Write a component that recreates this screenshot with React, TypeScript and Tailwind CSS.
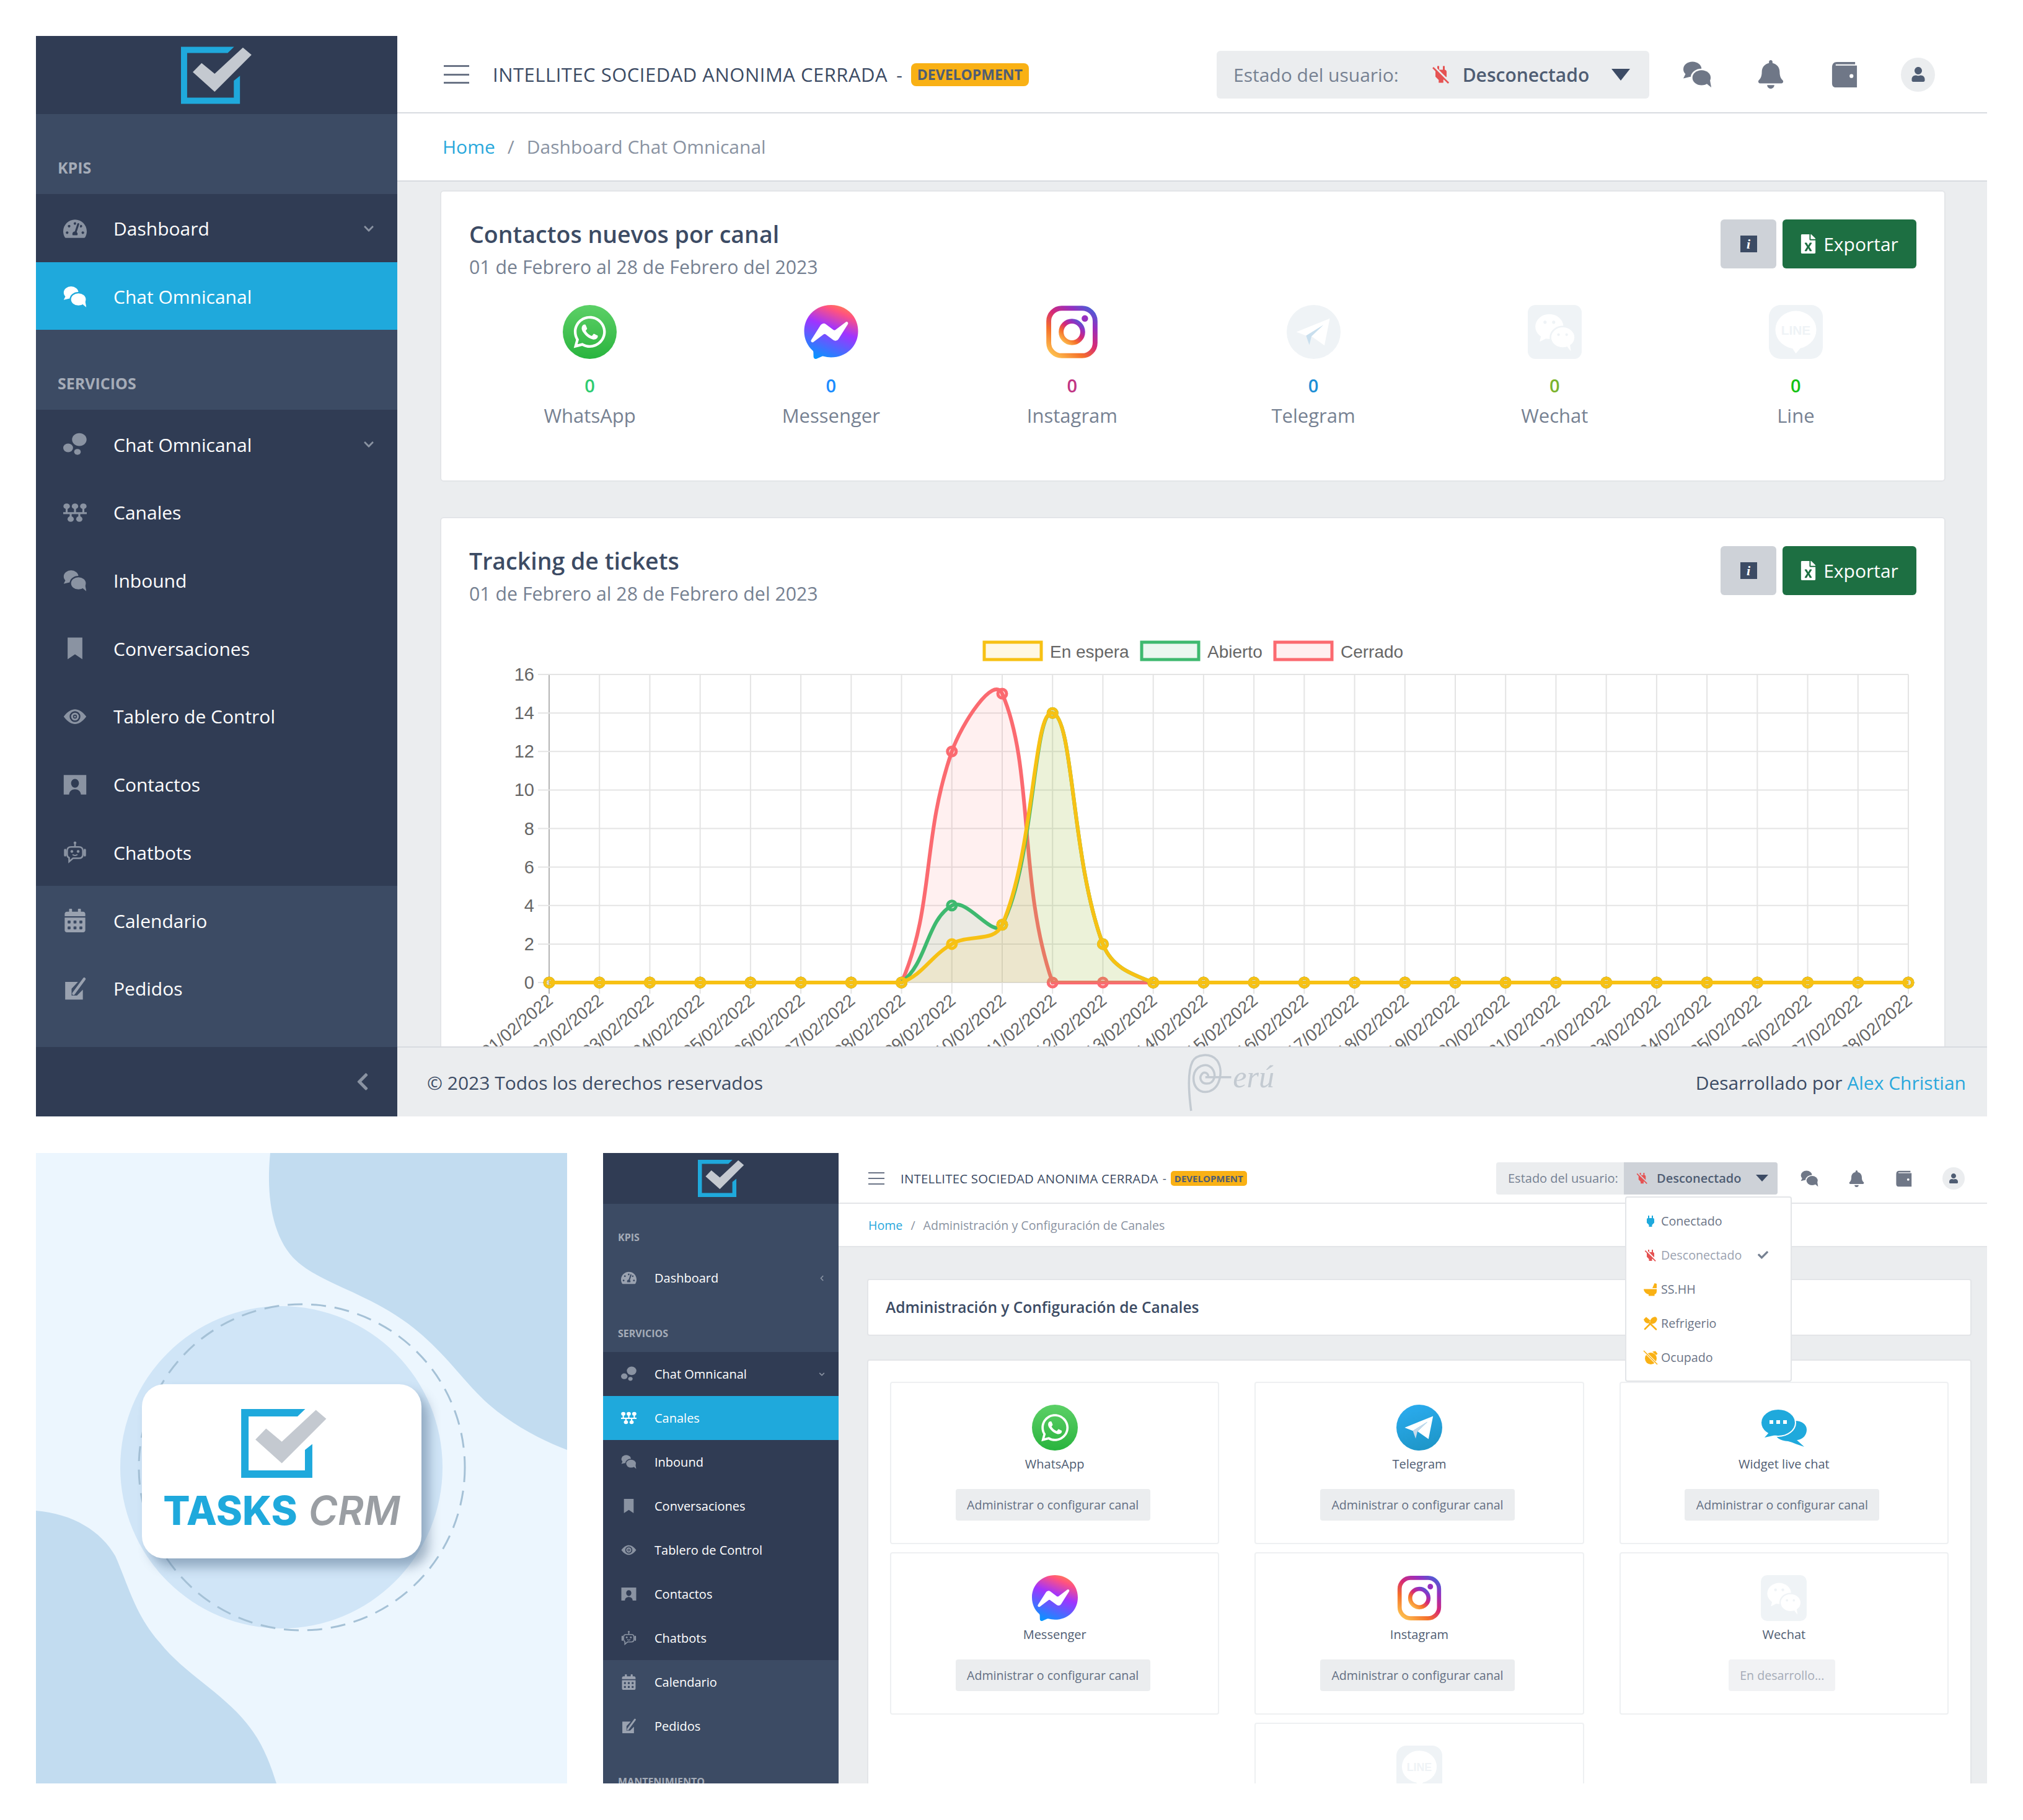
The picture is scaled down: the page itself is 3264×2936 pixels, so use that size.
import React from "react";
import { FaBell, FaCalendarAlt, FaCheck, FaChevronDown, FaChevronLeft, FaFileExcel, FaTachometerAlt, FaUser, FaWhatsapp } from "react-icons/fa";
import { MdPower, MdPowerOff } from "react-icons/md";

type IconProps = { className?: string };

function TasksLogo({ className }: IconProps) {
  return (
    <svg viewBox="0 0 290 232" className={className}>
      <path d="M0 0H216L190 25H25V207H215V138L240 118V232H0Z" fill="#1fa9dc" />
      <path d="M84 66L48 103L137 183L287 33L252 3L137 110Z" fill="#c4c9d0" />
    </svg>
  );
}

function ChatIcon({ className }: IconProps) {
  return (
    <svg viewBox="0 0 24 24" fill="currentColor" className={className}>
      <mask id="chat-back">
        <rect width="24" height="24" fill="white" />
        <ellipse cx="15.5" cy="14.5" rx="9" ry="7.5" fill="black" />
      </mask>
      <g mask="url(#chat-back)">
        <ellipse cx="8" cy="7.5" rx="7.5" ry="6.2" />
        <path d="M3 10L0.5 15L9 13Z" />
      </g>
      <ellipse cx="15.5" cy="14.5" rx="7.5" ry="6.2" />
      <path d="M18 18L23.5 22.5L22 14Z" />
    </svg>
  );
}

function CirclesIcon({ className }: IconProps) {
  return (
    <svg viewBox="0 0 24 24" fill="currentColor" className={className}>
      <ellipse cx="16.4" cy="7" rx="7.4" ry="6.6" />
      <ellipse cx="5" cy="15.5" rx="5" ry="4.4" />
      <ellipse cx="14.5" cy="19.5" rx="3.4" ry="3" />
    </svg>
  );
}

function ChannelsIcon({ className }: IconProps) {
  return (
    <svg viewBox="0 0 24 24" fill="currentColor" className={className}>
      <ellipse cx="3.5" cy="5.5" rx="3.3" ry="2.8" />
      <ellipse cx="12" cy="5.5" rx="3.3" ry="2.8" />
      <ellipse cx="20.5" cy="5.5" rx="3.3" ry="2.8" />
      <rect x="0" y="11.5" width="24" height="2" />
      <rect x="2.5" y="5.5" width="2" height="7" />
      <rect x="11" y="5.5" width="2" height="7" />
      <rect x="19.5" y="5.5" width="2" height="7" />
      <rect x="6.6" y="12" width="2" height="6" />
      <rect x="15.4" y="12" width="2" height="6" />
      <ellipse cx="7.6" cy="18.5" rx="3.2" ry="2.8" />
      <ellipse cx="16.4" cy="18.5" rx="3.2" ry="2.8" />
    </svg>
  );
}

function BookmarkIcon({ className }: IconProps) {
  return (
    <svg viewBox="0 0 24 24" fill="currentColor" className={className}>
      <path d="M4.5 1H19.5V23L12 18L4.5 23Z" />
    </svg>
  );
}

function EyeIcon({ className }: IconProps) {
  return (
    <svg viewBox="0 0 24 24" fill="currentColor" className={className}>
      <path fillRule="evenodd" d="M0.5 12C4.5 6.5 8.5 4.5 12 4.5S19.5 6.5 23.5 12C19.5 17.5 15.5 19.5 12 19.5S4.5 17.5 0.5 12ZM12 6.5A5.5 5.5 0 1 0 12 17.5A5.5 5.5 0 0 0 12 6.5Z" />
      <path fillRule="evenodd" d="M12 8A4 4 0 1 1 12 16A4 4 0 0 1 12 8ZM12 10A2 2 0 1 0 12 14A2 2 0 0 0 12 10Z" />
      <circle cx="12" cy="12" r="1" />
    </svg>
  );
}

function ContactIcon({ className }: IconProps) {
  return (
    <svg viewBox="0 0 24 24" fill="currentColor" className={className}>
      <path fillRule="evenodd" d="M0.5 2H23.5V22H18C18 18.5 15 16.5 12 16.5S6 18.5 6 22H0.5ZM12 6A4 4.5 0 1 0 12 15A4 4.5 0 0 0 12 6Z" />
    </svg>
  );
}

function BotIcon({ className }: IconProps) {
  return (
    <svg viewBox="0 0 24 24" fill="none" stroke="currentColor" strokeWidth="1.6" className={className}>
      <path d="M8 6.5H16C18.5 6.5 20 8 20 10.5V14C20 16.5 18.5 18 16 18H10L6 21.5V17.5C4.8 17 4 15.8 4 14V10.5C4 8 5.5 6.5 8 6.5Z" />
      <path d="M12 6.5V3.5" />
      <circle cx="12" cy="2.4" r="1.4" fill="currentColor" stroke="none" />
      <path d="M2 9.5V15M22 9.5V15" strokeWidth="2.4" strokeLinecap="round" />
      <circle cx="8.8" cy="11" r="1.4" fill="currentColor" stroke="none" />
      <circle cx="15.2" cy="11" r="1.4" fill="currentColor" stroke="none" />
      <path d="M9.5 14.2C11 15.4 13 15.4 14.5 14.2" strokeWidth="1.2" />
    </svg>
  );
}

function OrderIcon({ className }: IconProps) {
  return (
    <svg viewBox="0 0 24 24" fill="currentColor" className={className}>
      <path d="M2 5H15L8.5 12V19H14L20 13V23H2Z" />
      <path d="M10.5 17L21.5 2" fill="none" stroke="currentColor" strokeWidth="2.8" strokeLinecap="round" />
    </svg>
  );
}

function WalletIcon({ className }: IconProps) {
  return (
    <svg viewBox="0 0 24 24" fill="currentColor" className={className}>
      <path d="M2 6C2 3 3.5 1.5 6 1.5H21V3.5H5V4.5H22.5V22.5H5C3 22.5 2 21 2 19ZM18 11.5A1.6 1.6 0 1 0 18 14.7A1.6 1.6 0 0 0 18 11.5Z" fillRule="evenodd" />
    </svg>
  );
}

function ToiletIcon({ className }: IconProps) {
  return (
    <svg viewBox="0 0 24 24" fill="currentColor" className={className}>
      <path d="M15 10L18.5 2L22 3V10Z" />
      <path d="M1 11.5H22V15C22 18 20.5 19.5 18.5 20V22.5H9V20C5 19.5 1.5 16 1 11.5Z" />
    </svg>
  );
}

function CutleryIcon({ className }: IconProps) {
  return (
    <svg viewBox="0 0 24 24" fill="currentColor" className={className}>
      <ellipse cx="17" cy="7" rx="6.5" ry="4.6" transform="rotate(-45 17 7)" />
      <path d="M13 11L3 21" fill="none" stroke="currentColor" strokeWidth="2.6" strokeLinecap="round" />
      <path d="M1 5.5L5 1.5L12 7.5L7.5 12C4.5 11.5 2 9 1 5.5Z" />
      <path d="M9 10L21 21.5" fill="none" stroke="currentColor" strokeWidth="2.6" strokeLinecap="round" />
    </svg>
  );
}

function AlarmOffIcon({ className }: IconProps) {
  return (
    <svg viewBox="0 0 24 24" fill="currentColor" className={className}>
      <circle cx="12.5" cy="13.5" r="9.5" />
      <path d="M15 2.5L20 1.5L23.5 6L21 8Z" />
      <path d="M1 1L23 23" fill="none" stroke="#ffffff" strokeWidth="3.6" />
      <path d="M1 1L23 23" fill="none" stroke="currentColor" strokeWidth="1.6" />
    </svg>
  );
}

function WhatsappLogo({ className }: IconProps) {
  return (
    <div className={`flex items-center justify-center rounded-full bg-gradient-to-b from-[#5bd066] to-[#27b43e] text-white ${className}`}>
      <FaWhatsapp className="w-[68%] h-[68%]" />
    </div>
  );
}

function MessengerLogo({ className }: IconProps) {
  return (
    <svg viewBox="0 0 24 24" className={className}>
      <defs>
        <linearGradient id="messenger-fill" x1="0.2" y1="1" x2="0.6" y2="0">
          <stop offset="0" stopColor="#0099ff" />
          <stop offset="0.6" stopColor="#a033ff" />
          <stop offset="0.9" stopColor="#ff5280" />
          <stop offset="1" stopColor="#ff7061" />
        </linearGradient>
      </defs>
      <path fill="url(#messenger-fill)" fillRule="evenodd" d="M12 0C5.24 0 0 4.952 0 11.64c0 3.499 1.434 6.521 3.769 8.61a.96.96 0 0 1 .323.683l.065 2.135a.96.96 0 0 0 1.347.85l2.381-1.053a.96.96 0 0 1 .641-.046A13 13 0 0 0 12 23.28c6.76 0 12-4.952 12-11.64S18.76 0 12 0" />
      <path fill="#ffffff" d="M18.806 7.44c.522-.03.971.567.63 1.094l-4.178 6.628a1.61 1.61 0 0 1-2.319.427l-3.32-2.489a.86.86 0 0 0-1.03 0l-4.482 3.402c-.6.454-1.385-.263-.981-.899l4.178-6.628a1.61 1.61 0 0 1 2.319-.427l3.32 2.489a.86.86 0 0 0 1.03 0l4.483-3.402a.6.6 0 0 1 .35-.195" />
    </svg>
  );
}

function InstagramLogo({ className }: IconProps) {
  return (
    <svg viewBox="0 0 100 100" className={className}>
      <defs>
        <linearGradient id="insta-stroke" x1="0.1" y1="1" x2="0.9" y2="0">
          <stop offset="0" stopColor="#fdc04e" />
          <stop offset="0.3" stopColor="#f5702a" />
          <stop offset="0.55" stopColor="#d62976" />
          <stop offset="0.8" stopColor="#962fbf" />
          <stop offset="1" stopColor="#4f5bd5" />
        </linearGradient>
      </defs>
      <rect x="7" y="6" width="86" height="88" rx="24" fill="none" stroke="url(#insta-stroke)" strokeWidth="9" />
      <circle cx="50" cy="50" r="20" fill="none" stroke="url(#insta-stroke)" strokeWidth="9" />
      <circle cx="74" cy="25" r="6" fill="#962fbf" />
    </svg>
  );
}

function TelegramLogo({ className, faded }: IconProps & { faded?: boolean }) {
  return (
    <svg viewBox="0 0 100 100" className={className}>
      <defs>
        <linearGradient id="telegram-fill" x1="0.3" y1="0" x2="0.6" y2="1">
          <stop offset="0" stopColor="#2aabee" />
          <stop offset="1" stopColor="#1e96c8" />
        </linearGradient>
      </defs>
      <circle cx="50" cy="50" r="50" fill={faded ? "#eff3f6" : "url(#telegram-fill)"} />
      <path d="M18 50L80 25L70 75L46 58L68 37L36 57Z" fill="#ffffff" />
      <path d="M36 57L42 74L46 58L68 37Z" fill={faded ? "#c9dfee" : "#c8daea"} />
    </svg>
  );
}

function WidgetChatLogo({ className }: IconProps) {
  return (
    <svg viewBox="0 0 74 62" fill="#1fa9dc" className={className}>
      <path d="M74 34C74 46 64 51 58 51L70 62C60 59 52 55 44 53C30 52 24 47 24 40C34 42 50 38 55 20C66 20 74 26 74 34Z" />
      <ellipse cx="28" cy="23" rx="28" ry="22" stroke="#ffffff" strokeWidth="2" />
      <path d="M14 38L6 47L24 43Z" />
      <rect x="14" y="19" width="6" height="6" fill="#ffffff" />
      <rect x="25" y="19" width="6" height="6" fill="#ffffff" />
      <rect x="36" y="19" width="6" height="6" fill="#ffffff" />
    </svg>
  );
}

function WechatLogo({ className }: IconProps) {
  return (
    <svg viewBox="0 0 100 100" className={className}>
      <rect width="100" height="100" rx="14" fill="#eff3f6" />
      <ellipse cx="40" cy="40" rx="26" ry="23" fill="#ffffff" />
      <path d="M25 56L22 68L38 60Z" fill="#ffffff" />
      <ellipse cx="65" cy="60" rx="23" ry="20" fill="#ffffff" stroke="#eff3f6" strokeWidth="3" />
      <path d="M72 76L80 86L78 72Z" fill="#ffffff" />
      <circle cx="32" cy="32" r="3" fill="#eff3f6" />
      <circle cx="48" cy="32" r="3" fill="#eff3f6" />
      <circle cx="57" cy="55" r="2.5" fill="#eff3f6" />
      <circle cx="72" cy="55" r="2.5" fill="#eff3f6" />
    </svg>
  );
}

function LineLogo({ className }: IconProps) {
  return (
    <svg viewBox="0 0 100 100" className={className}>
      <rect width="100" height="100" rx="22" fill="#eff3f6" />
      <ellipse cx="50" cy="46" rx="38" ry="35" fill="#ffffff" />
      <path d="M42 78L50 90L62 76Z" fill="#ffffff" />
      <text x="50" y="55" textAnchor="middle" fontSize="24" fontWeight="700" fill="#eff3f6" fontFamily="Liberation Sans">LINE</text>
    </svg>
  );
}

function PeruLogo() {
  return (
    <div className="flex items-center w-[150px]">
      <svg viewBox="0 0 70 92" fill="none" stroke="#c3cad1" strokeWidth="3.4" className="w-[84px] h-[96px]">
        <path d="M8 90C4 60 2 30 10 14C16 2 38 0 48 12C58 26 54 54 36 60C20 64 10 52 12 36C14 22 30 14 40 24C48 34 44 48 32 48C24 48 20 40 24 34C28 28 36 32 34 38" />
        <path d="M30 38H70" />
      </svg>
      <span className="-ml-[3px] -mt-[18px] font-['Liberation_Serif',serif] italic text-[50px] leading-none text-[#c3cad1]">erú</span>
    </div>
  );
}

type NavItem = { label: string; Icon: React.ComponentType<IconProps>; tone: "dark" | "active" | "plain"; chevron?: "down" | "left" };

const NavRowTone = { dark: "bg-[#303c54]", active: "bg-[#1fa9dc]", plain: "" };
const NavIconTone = { dark: "text-[#8a93a2]", active: "text-white", plain: "text-[#9aa2b0]" };

const BIG = {
  row: "h-[109.7px] gap-[43px] pl-[44px] pt-[2px] text-[30px]",
  icon: "w-[38px] h-[38px]",
  chevron: "w-[18px] h-[18px] mr-[37px]",
  section: "h-[129px] pl-[35px] pb-[24px] text-[25px]",
};
const SMALL = {
  row: "h-[71px] gap-[29px] pl-[29px] text-[20px]",
  icon: "w-[25px] h-[25px]",
  chevron: "w-[10px] h-[10px] mr-[22px]",
  section: "h-[84px] pl-[24px] pb-[18px] text-[16px]",
};

function SidebarRow({ item, size }: { item: NavItem; size: typeof BIG }) {
  const Chevron = item.chevron === "left" ? FaChevronLeft : FaChevronDown;
  return (
    <div className={`flex items-center shrink-0 text-white ${size.row} ${NavRowTone[item.tone]}`}>
      <span className={`flex items-center justify-center shrink-0 ${size.icon} ${NavIconTone[item.tone]}`}>
        <item.Icon className="w-full h-full" />
      </span>
      <span className="flex-1">{item.label}</span>
      {item.chevron && <Chevron className={`text-[#8a93a2] ${size.chevron}`} />}
    </div>
  );
}

function SidebarSection({ title, size }: { title: string; size: typeof BIG }) {
  return <div className={`flex items-end shrink-0 font-bold text-[#a5acb8] ${size.section}`}>{title}</div>;
}

function servicios(first: NavItem["tone"]): NavItem[] {
  return [
    { label: "Canales", Icon: ChannelsIcon, tone: first },
    { label: "Inbound", Icon: ChatIcon, tone: "dark" },
    { label: "Conversaciones", Icon: BookmarkIcon, tone: "dark" },
    { label: "Tablero de Control", Icon: EyeIcon, tone: "dark" },
    { label: "Contactos", Icon: ContactIcon, tone: "dark" },
    { label: "Chatbots", Icon: BotIcon, tone: "dark" },
    { label: "Calendario", Icon: FaCalendarAlt, tone: "plain" },
    { label: "Pedidos", Icon: OrderIcon, tone: "plain" },
  ];
}

function HamburgerIcon({ className, bar }: { className: string; bar: string }) {
  return (
    <div className={`flex flex-col justify-between ${className}`}>
      <span className={`block w-full bg-[#6b7486] ${bar}`} />
      <span className={`block w-full bg-[#6b7486] ${bar}`} />
      <span className={`block w-full bg-[#6b7486] ${bar}`} />
    </div>
  );
}

function ExportActions() {
  return (
    <div className="flex gap-[10px]">
      <button className="flex items-center justify-center w-[90px] h-[79px] rounded-[6px] bg-[#ced2d8]">
        <span className="flex items-center justify-center w-[27px] h-[27px] bg-[#3c4b64] text-white text-[22px] italic font-bold font-['Liberation_Serif',serif]">i</span>
      </button>
      <button className="flex items-center justify-center gap-[12px] w-[216px] h-[79px] rounded-[6px] bg-[#1d6f42] text-white text-[30px]">
        <FaFileExcel className="w-[25px] h-[31px]" />
        Exportar
      </button>
    </div>
  );
}

function CardHeading({ title }: { title: string }) {
  return (
    <div className="flex justify-between">
      <div>
        <h2 className="text-[37.5px] leading-[50px] font-semibold text-[#3c4b64] mt-[-1px]">{title}</h2>
        <p className="text-[30.3px] leading-[40px] text-[#768192] mt-[8px]">01 de Febrero al 28 de Febrero del 2023</p>
      </div>
      <ExportActions />
    </div>
  );
}

const counters = [
  { name: "WhatsApp", color: "text-[#2ecc71]", logo: <WhatsappLogo className="w-[87px] h-[87px]" /> },
  { name: "Messenger", color: "text-[#1a8cff]", logo: <MessengerLogo className="w-[88px] h-[87px]" /> },
  { name: "Instagram", color: "text-[#c13584]", logo: <InstagramLogo className="w-[87px] h-[87px]" /> },
  { name: "Telegram", color: "text-[#1c8fd6]", logo: <TelegramLogo faded className="w-[87px] h-[87px]" /> },
  { name: "Wechat", color: "text-[#7bb32e]", logo: <WechatLogo className="w-[87px] h-[87px]" /> },
  { name: "Line", color: "text-[#14c314]", logo: <LineLogo className="w-[87px] h-[87px]" /> },
];

const X0 = 129;
const DX = (2322 - 129) / 27;
const Y0 = 565;
const YTOP = 68;
const UNIT = (Y0 - YTOP) / 16;

function makeSeries(peak: Record<number, number>) {
  return Array.from({ length: 28 }, (_, i) => peak[i] ?? 0);
}

function curve(values: number[]) {
  const pts = values.map((v, i) => ({ x: X0 + i * DX, y: Y0 - v * UNIT }));
  const clamp = (y: number) => Math.min(Y0, Math.max(YTOP, y));
  const ctrl = pts.map((cur, i) => {
    const prev = pts[i - 1] ?? cur;
    const next = pts[i + 1] ?? cur;
    const d01 = Math.hypot(cur.x - prev.x, cur.y - prev.y);
    const d12 = Math.hypot(next.x - cur.x, next.y - cur.y);
    const total = d01 + d12 || 1;
    const fa = 0.4 * (d01 / total);
    const fb = 0.4 * (d12 / total);
    return {
      px: cur.x - fa * (next.x - prev.x),
      py: clamp(cur.y - fa * (next.y - prev.y)),
      nx: cur.x + fb * (next.x - prev.x),
      ny: clamp(cur.y + fb * (next.y - prev.y)),
    };
  });
  let d = `M${pts[0].x} ${pts[0].y}`;
  for (let i = 1; i < pts.length; i++) {
    d += `C${ctrl[i - 1].nx} ${ctrl[i - 1].ny} ${ctrl[i].px} ${ctrl[i].py} ${pts[i].x} ${pts[i].y}`;
  }
  return { d, pts };
}

const seriesList = [
  { name: "Cerrado", color: "#fb6a70", fill: "rgba(251,106,112,0.1)", values: makeSeries({ 8: 12, 9: 15 }) },
  { name: "Abierto", color: "#3eb96f", fill: "rgba(62,185,111,0.1)", values: makeSeries({ 8: 4, 9: 3, 10: 14, 11: 2 }) },
  { name: "En espera", color: "#f7c114", fill: "rgba(247,193,20,0.1)", values: makeSeries({ 8: 2, 9: 3, 10: 14, 11: 2 }) },
];

const legend = [
  { name: "En espera", x: 831, tx: 937, stroke: "#f7c114", fill: "#fff8e4" },
  { name: "Abierto", x: 1085, tx: 1191, stroke: "#3eb96f", fill: "#ebf7f0" },
  { name: "Cerrado", x: 1300, tx: 1406, stroke: "#fb6a70", fill: "#ffeff0" },
];

function TrackingChart() {
  const labels = Array.from({ length: 28 }, (_, i) => `${String(i + 1).padStart(2, "0")}/02/2022`);
  const ticks = Array.from({ length: 9 }, (_, i) => i * 2);
  return (
    <svg width="2334" height="760" className="block mt-[42px]" fontFamily="Liberation Sans">
      {legend.map((l) => (
        <g key={l.name}>
          <rect x={l.x} y={16} width={92} height={28} fill={l.fill} stroke={l.stroke} strokeWidth="5" />
          <text x={l.tx} y={41} fontSize="28" fill="#666666">{l.name}</text>
        </g>
      ))}
      {labels.map((_, i) => (
        <line key={i} x1={X0 + i * DX} x2={X0 + i * DX} y1={YTOP} y2={Y0 + 18} stroke={i === 0 ? "#b4b4b4" : "#e4e4e4"} strokeWidth="2" />
      ))}
      {ticks.map((t) => (
        <g key={t}>
          <line x1={X0 - 18} x2={2322} y1={Y0 - t * UNIT} y2={Y0 - t * UNIT} stroke="#e4e4e4" strokeWidth="2" />
          <text x={X0 - 24} y={Y0 - t * UNIT + 10} textAnchor="end" fontSize="29" fill="#666666">{t}</text>
        </g>
      ))}
      {seriesList.map((s) => {
        const { d, pts } = curve(s.values);
        return (
          <g key={s.name}>
            <path d={`${d}L2322 ${Y0}L${X0} ${Y0}Z`} fill={s.fill} />
            <path d={d} fill="none" stroke={s.color} strokeWidth="6" />
            {pts.map((p, i) => (
              <circle key={i} cx={p.x} cy={p.y} r="7" fill={s.fill} stroke={s.color} strokeWidth="5" />
            ))}
          </g>
        );
      })}
      {labels.map((l, i) => (
        <text key={l} x={X0 + i * DX + 8} y={Y0 + 32} textAnchor="end" fontSize="28" fill="#666666" transform={`rotate(-40 ${X0 + i * DX + 8} ${Y0 + 32})`}>{l}</text>
      ))}
    </svg>
  );
}

function DashboardScreen() {
  const rows: NavItem[] = [
    { label: "Dashboard", Icon: FaTachometerAlt, tone: "dark", chevron: "down" },
    { label: "Chat Omnicanal", Icon: ChatIcon, tone: "active" },
  ];
  return (
    <section className="flex h-[1743px] shrink-0">
      <aside className="flex flex-col w-[583px] shrink-0 bg-[#3c4b64]">
        <div className="flex items-center justify-center h-[126px] shrink-0 bg-[#303c54]">
          <TasksLogo className="w-[115px] h-[93px]" />
        </div>
        <SidebarSection title="KPIS" size={BIG} />
        {rows.map((r) => <SidebarRow key={r.label + r.tone} item={r} size={BIG} />)}
        <SidebarSection title="SERVICIOS" size={BIG} />
        <SidebarRow item={{ label: "Chat Omnicanal", Icon: CirclesIcon, tone: "dark", chevron: "down" }} size={BIG} />
        {servicios("dark").map((r) => <SidebarRow key={r.label} item={r} size={BIG} />)}
        <div className="flex-1" />
        <div className="flex items-center justify-end h-[112px] shrink-0 bg-[#303c54] pr-[44px]">
          <FaChevronLeft className="w-[24px] h-[32px] text-[#8a93a2]" />
        </div>
      </aside>
      <main className="flex flex-col flex-1 min-w-0 bg-[#ebedef]">
        <header className="flex items-center h-[125px] shrink-0 bg-white border-b-2 border-[#d8dbe0] pl-[75px] pr-[84px] pt-[1px]">
          <HamburgerIcon className="w-[41px] h-[30px] mr-[38px]" bar="h-[3px]" />
          <span className="text-[31px] font-medium tracking-[0.5px] text-[#3c4b64] whitespace-nowrap">INTELLITEC SOCIEDAD ANONIMA CERRADA</span>
          <span className="text-[30px] text-[#3c4b64] mx-[14px]">-</span>
          <span className="flex items-center justify-center w-[190px] h-[37px] rounded-[8px] bg-[#f9b115] text-[#4f5d73] text-[23px] font-bold">DEVELOPMENT</span>
          <div className="flex-1" />
          <div className="flex items-center w-[698px] h-[77px] rounded-[6px] bg-[#ebedef] pl-[27px] text-[30px] mr-[54px]">
            <span className="text-[#768192] whitespace-nowrap">Estado del usuario:</span>
            <MdPowerOff className="w-[36px] h-[36px] text-[#e55353] ml-[50px] mr-[17px]" />
            <span className="font-semibold text-[#4f5d73]">Desconectado</span>
            <span className="ml-[36px] w-0 h-0 border-x-[15px] border-x-transparent border-t-[19px] border-t-[#3c4b64]" />
          </div>
          <div className="flex items-center gap-[72px] text-[#6f7787]">
            <ChatIcon className="w-[47px] h-[47px]" />
            <FaBell className="w-[46px] h-[46px]" />
            <WalletIcon className="w-[47px] h-[47px]" />
            <span className="flex items-center justify-center w-[55px] h-[55px] rounded-full bg-[#ebedef] text-[#4f5d73] -ml-[4px]">
              <FaUser className="w-[24px] h-[24px]" />
            </span>
          </div>
        </header>
        <nav className="flex items-center h-[110px] shrink-0 bg-white border-b-2 border-[#d8dbe0] pl-[73px] pb-[2px] text-[30px]">
          <span className="text-[#2aa8dc]">Home</span>
          <span className="text-[#8a93a2] mx-[20px]">/</span>
          <span className="text-[#8a93a2]">Dashboard Chat Omnicanal</span>
        </nav>
        <div className="flex-1 min-h-0 overflow-hidden pt-[14px] pl-[69px] pr-[67px]">
          <div className="h-[470px] rounded-[6px] bg-white border-2 border-[#e3e5e8] px-[45px] pt-[45px] mb-[57px]">
            <CardHeading title="Contactos nuevos por canal" />
            <div className="grid grid-cols-6 mt-[41px]">
              {counters.map((c) => (
                <div key={c.name} className="flex flex-col items-center">
                  {c.logo}
                  <span className={`text-[29px] leading-[40px] font-semibold mt-[23px] ${c.color}`}>0</span>
                  <span className="text-[31px] leading-[44px] text-[#768192] mt-[6px]">{c.name}</span>
                </div>
              ))}
            </div>
          </div>
          <div className="rounded-[6px] bg-white border-2 border-[#e3e5e8] px-[45px] pt-[45px] h-[900px]">
            <CardHeading title="Tracking de tickets" />
            <TrackingChart />
          </div>
        </div>
        <footer className="relative flex items-center justify-between h-[113px] shrink-0 bg-[#ebedef] border-t-2 border-[#d8dbe0] pl-[48px] pr-[34px] text-[30px] text-[#3c4b64]">
          <span className="mt-[2px]">© 2023 Todos los derechos reservados</span>
          <PeruLogo />
          <span className="mt-[2px]">Desarrollado por <span className="text-[#2aa8dc]">Alex Christian</span></span>
        </footer>
      </main>
    </section>
  );
}

function PromoPanel() {
  return (
    <div className="relative w-[857px] h-[1017px] shrink-0 overflow-hidden bg-[#ecf6fe]">
      <svg viewBox="0 0 857 1017" className="absolute inset-0 w-full h-full">
        <path d="M378 0C370 80 385 150 430 182C470 212 540 230 600 275C660 320 690 370 730 405C770 440 820 465 857 479V0Z" fill="#c2dcf0" />
        <path d="M0 577C60 582 105 610 128 650C150 700 160 745 200 790C240 840 300 870 340 920C365 950 378 985 388 1017H0Z" fill="#c2dcf0" />
        <circle cx="396" cy="507" r="260" fill="#d0e5f7" />
        <circle cx="429" cy="507" r="263" fill="none" stroke="#a5c1d6" strokeWidth="3" strokeDasharray="24 14" />
      </svg>
      <div className="absolute left-[171px] top-[373px] flex flex-col items-center w-[451px] h-[281px] rounded-[36px] bg-white shadow-[12px_14px_18px_rgba(70,100,130,0.45)] pt-[40px]">
        <TasksLogo className="w-[139px] h-[111px] mr-[-8px]" />
        <div className="mt-[18px] text-[64px] leading-[70px] font-['Inter',sans-serif] whitespace-nowrap">
          <span className="font-extrabold text-[#1fa9dc]">TASKS</span>{" "}
          <span className="font-semibold italic text-[#9a9ea3]">CRM</span>
        </div>
      </div>
    </div>
  );
}

const statusOptions = [
  { label: "Conectado", Icon: MdPower, color: "text-[#1fa9dc]", active: false },
  { label: "Desconectado", Icon: MdPowerOff, color: "text-[#e55353]", active: true },
  { label: "SS.HH", Icon: ToiletIcon, color: "text-[#f9b115]", active: false },
  { label: "Refrigerio", Icon: CutleryIcon, color: "text-[#f9b115]", active: false },
  { label: "Ocupado", Icon: AlarmOffIcon, color: "text-[#f9b115]", active: false },
];

function StatusMenu() {
  return (
    <div className="absolute left-[1649px] top-[70px] z-10 flex flex-col w-[269px] h-[299px] rounded-[4px] bg-white border-2 border-[#e3e5e8] pt-[10px]">
      {statusOptions.map((o) => (
        <div key={o.label} className={`flex items-center h-[55px] pl-[27px] text-[19.7px] ${o.active ? "text-[#9aa2b0]" : "text-[#6b7486]"}`}>
          <o.Icon className={`w-[24px] h-[24px] mr-[5px] ${o.color}`} />
          <span className="flex-1">{o.label}</span>
          {o.active && <FaCheck className="w-[17px] h-[17px] text-[#768192] mr-[36px]" />}
        </div>
      ))}
    </div>
  );
}

const channels: { name: string; logo: React.ReactNode; action: string; soon?: boolean; cls?: string }[] = [
  { name: "WhatsApp", logo: <WhatsappLogo className="w-[74px] h-[74px]" />, action: "Administrar o configurar canal" },
  { name: "Telegram", logo: <TelegramLogo className="w-[74px] h-[74px]" />, action: "Administrar o configurar canal" },
  { name: "Widget live chat", logo: <WidgetChatLogo className="w-[74px] h-[62px] my-[6px]" />, action: "Administrar o configurar canal" },
  { name: "Messenger", logo: <MessengerLogo className="w-[74px] h-[74px]" />, action: "Administrar o configurar canal" },
  { name: "Instagram", logo: <InstagramLogo className="w-[74px] h-[74px]" />, action: "Administrar o configurar canal" },
  { name: "Wechat", logo: <WechatLogo className="w-[74px] h-[74px]" />, action: "En desarrollo...", soon: true },
  { name: "Line", logo: <LineLogo className="w-[74px] h-[74px]" />, action: "En desarrollo...", soon: true, cls: "col-start-2" },
];

function ChannelsScreen() {
  return (
    <section className="relative flex flex-1 min-w-0 h-[1017px] overflow-hidden">
      <aside className="flex flex-col w-[380px] shrink-0 bg-[#3c4b64]">
        <div className="flex items-center justify-center h-[82px] shrink-0 bg-[#303c54]">
          <TasksLogo className="w-[75px] h-[60px]" />
        </div>
        <SidebarSection title="KPIS" size={SMALL} />
        <SidebarRow item={{ label: "Dashboard", Icon: FaTachometerAlt, tone: "plain", chevron: "left" }} size={SMALL} />
        <SidebarSection title="SERVICIOS" size={SMALL} />
        <SidebarRow item={{ label: "Chat Omnicanal", Icon: CirclesIcon, tone: "dark", chevron: "down" }} size={SMALL} />
        {servicios("active").map((r) => <SidebarRow key={r.label} item={r} size={SMALL} />)}
        <SidebarSection title="MANTENIMIENTO" size={SMALL} />
      </aside>
      <main className="flex flex-col flex-1 min-w-0 bg-[#ebedef]">
        <header className="flex items-center h-[82px] shrink-0 bg-white border-b-2 border-[#e3e5e8] pl-[48px] pr-[36px] pt-[2px]">
          <HamburgerIcon className="w-[26px] h-[20px] mr-[26px]" bar="h-[2px]" />
          <span className="text-[20.4px] font-medium tracking-[0.23px] text-[#3c4b64] whitespace-nowrap">INTELLITEC SOCIEDAD ANONIMA CERRADA</span>
          <span className="text-[19px] text-[#3c4b64] mx-[7px]">-</span>
          <span className="flex items-center justify-center w-[123px] h-[24px] rounded-[5px] bg-[#f9b115] text-[#4f5d73] text-[15px] font-bold">DEVELOPMENT</span>
          <div className="flex-1" />
          <div className="flex items-center w-[454px] h-[52px] rounded-[4px] bg-[#ebedef] mr-[37px] mb-[1px] text-[20px] overflow-hidden">
            <span className="w-[206px] pl-[19px] text-[#768192] whitespace-nowrap">Estado del usuario:</span>
            <div className="flex flex-1 items-center h-full bg-[#ced2d8] pl-[18px]">
              <MdPowerOff className="w-[23px] h-[23px] text-[#e55353] mr-[12px]" />
              <span className="font-semibold text-[#4f5d73]">Desconectado</span>
              <span className="ml-[24px] w-0 h-0 border-x-[10px] border-x-transparent border-t-[11px] border-t-[#3c4b64]" />
            </div>
          </div>
          <div className="flex items-center gap-[48px] text-[#6f7787]">
            <ChatIcon className="w-[29px] h-[29px]" />
            <FaBell className="w-[27px] h-[27px]" />
            <WalletIcon className="w-[29px] h-[29px]" />
            <span className="flex items-center justify-center w-[36px] h-[36px] rounded-full bg-[#ebedef] text-[#4f5d73]">
              <FaUser className="w-[16px] h-[16px]" />
            </span>
          </div>
        </header>
        <nav className="flex items-center h-[70px] shrink-0 bg-white border-b-2 border-[#e3e5e8] pl-[48px] pt-[2px] text-[19.6px]">
          <span className="text-[#2aa8dc]">Home</span>
          <span className="text-[#8a93a2] mx-[13px]">/</span>
          <span className="text-[#8a93a2]">Administración y Configuración de Canales</span>
        </nav>
        <div className="flex-1 min-h-0 overflow-hidden pt-[51px] pl-[46px] pr-[25px]">
          <div className="flex items-center h-[92px] rounded-[4px] bg-white border-2 border-[#e3e5e8] pl-[28px] text-[24.5px] font-semibold text-[#3c4b64]">
            Administración y Configuración de Canales
          </div>
          <div className="rounded-[4px] bg-white border-2 border-[#e3e5e8] mt-[38px] px-[35px] pt-[34px] h-[900px]">
            <div className="grid grid-cols-3 gap-x-[57px] gap-y-[13px]">
              {channels.map((c) => (
                <div key={c.name} className={`flex flex-col items-center h-[262px] rounded-[4px] border-2 border-[#eef0f2] pt-[35px] ${c.cls ?? ""}`}>
                  {c.logo}
                  <span className="text-[20px] leading-[30px] text-[#4f5d73] mt-[7px]">{c.name}</span>
                  <span className={`flex items-center justify-center h-[51px] rounded-[4px] mt-[25px] mr-[6px] text-[19.6px] ${c.soon ? "w-[172px] bg-[#f1f2f4] text-[#a5acb8]" : "w-[314px] bg-[#ebedef] text-[#636f83]"}`}>{c.action}</span>
                </div>
              ))}
            </div>
          </div>
        </div>
      </main>
      <StatusMenu />
    </section>
  );
}

export default function App() {
  return (
    <div className="flex flex-col gap-[59px] w-[3264px] h-[2936px] overflow-hidden bg-white pt-[58px] px-[58px] font-['Open_Sans',sans-serif]">
      <DashboardScreen />
      <div className="flex gap-[58px]">
        <PromoPanel />
        <ChannelsScreen />
      </div>
    </div>
  );
}
